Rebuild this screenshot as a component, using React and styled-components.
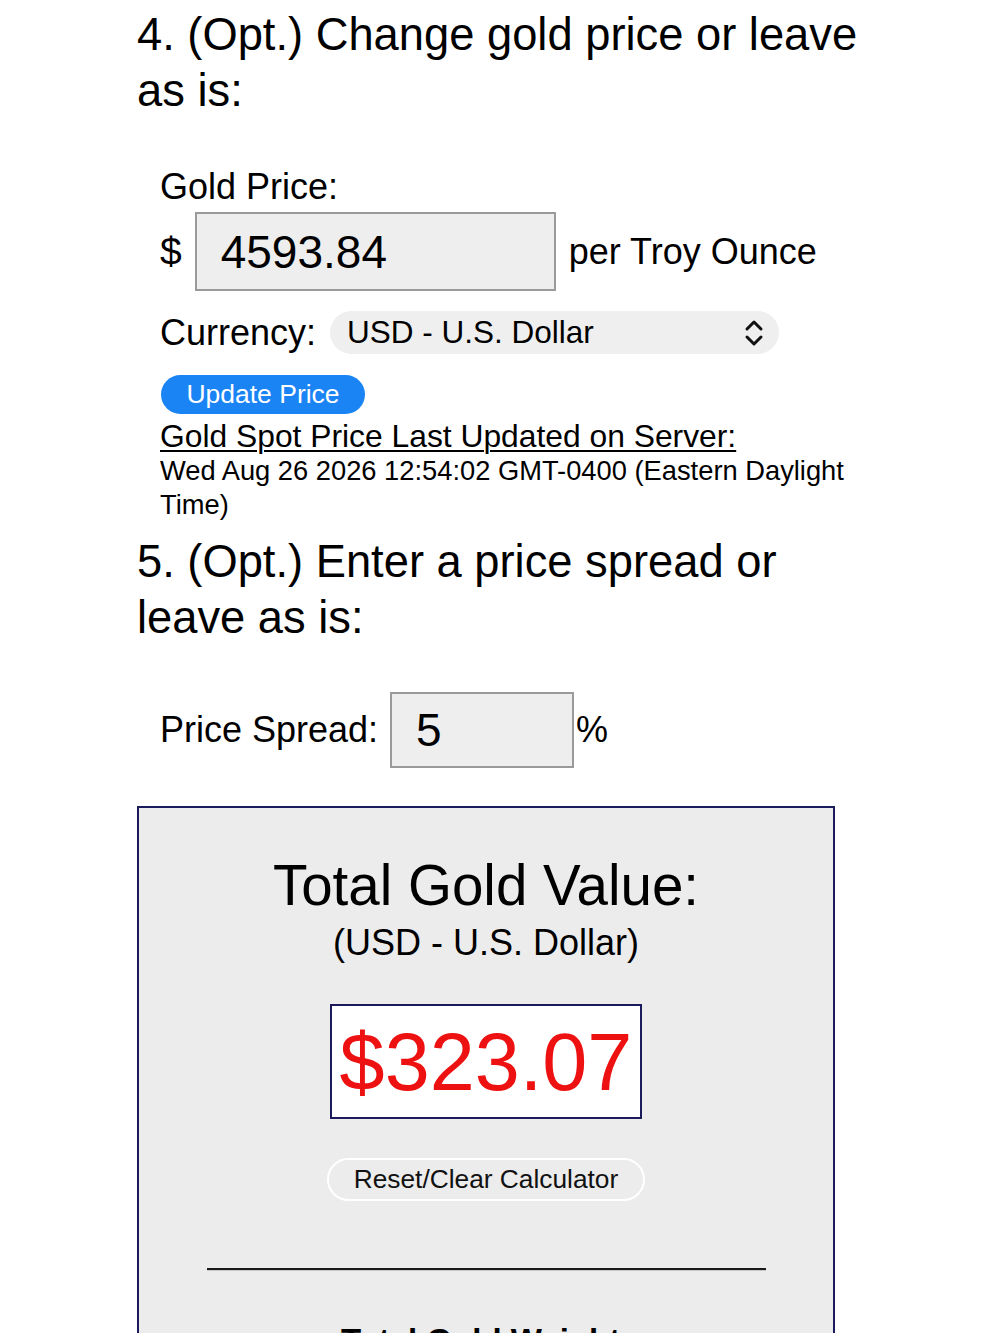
import React from "react";
import styled, { createGlobalStyle } from "styled-components";

const Global = createGlobalStyle`
  html, body { margin: 0; padding: 0; background: #ffffff; }
  body { font-family: "Liberation Sans", Arial, Helvetica, sans-serif; color: #000; }
  * { box-sizing: border-box; }
`;

const Page = styled.div`
  width: 1000px;
  padding: 7px 0 0 137px;
  overflow: hidden;
  height: 1333px;
`;

const Column = styled.div`
  width: 728px;
`;

const StepHeading = styled.h2`
  margin: ${(p) => p.$mt || 0}px 0 0 0;
  font-size: 45.3px;
  line-height: 56px;
  font-weight: normal;
`;

const Indent = styled.div`
  padding-left: 23px;
`;

const FieldLabel = styled.div`
  margin-top: ${(p) => p.$mt || 0}px;
  font-size: 36px;
  line-height: 42px;
`;

const Row = styled.div`
  display: flex;
  align-items: center;
  gap: ${(p) => p.$gap || 12}px;
  margin-top: ${(p) => p.$mt || 0}px;
  font-size: 36px;
`;

const Dollar = styled.span`
  font-size: 39px;
`;

const ValueInput = styled.input`
  width: ${(p) => p.$w}px;
  height: ${(p) => p.$h}px;
  background: #eeeeee;
  border: 2px solid #9a9a9a;
  padding: 0 0 0 24px;
  font-family: "Liberation Sans", Arial, sans-serif;
  font-size: 46px;
  color: #000;
  outline: none;
`;

const Select = styled.div`
  width: 449px;
  height: 43px;
  border-radius: 22px;
  background: #efefef;
  display: flex;
  align-items: center;
  justify-content: space-between;
  padding: 0 14px 0 17px;
  font-size: 31.5px;
`;

const UpdateButton = styled.button`
  margin-top: 21px;
  margin-left: 1px;
  width: 204px;
  height: 39px;
  border: none;
  border-radius: 20px;
  background: #1a84f5;
  color: #fff;
  font-family: "Liberation Sans", Arial, sans-serif;
  font-size: 26.5px;
  padding: 0;
  display: block;
`;

const ServerLabel = styled.div`
  margin-top: 5px;
  font-size: 31.8px;
  line-height: 35px;
  text-decoration: underline;
  text-decoration-thickness: 2px;
  text-underline-offset: 3px;
`;

const DateText = styled.div`
  font-size: 27.3px;
  line-height: 34px;
`;

const Percent = styled.span`
  font-size: 36px;
`;

const ResultBox = styled.div`
  margin-top: 38px;
  width: 698px;
  height: 600px;
  border: 2px solid #1b1b5c;
  background: #ececec;
  display: flex;
  flex-direction: column;
  align-items: center;
  padding-top: 47px;
`;

const ResultTitle = styled.div`
  font-size: 56.5px;
  line-height: 62px;
`;

const ResultSub = styled.div`
  margin-top: 5px;
  font-size: 36px;
  line-height: 42px;
`;

const ValueBox = styled.div`
  margin-top: 40px;
  width: 312px;
  height: 115px;
  border: 2px solid #1b1b5c;
  background: #ffffff;
  display: flex;
  align-items: center;
  justify-content: center;
  color: #ee1111;
  font-size: 81px;
  padding-top: 2px;
`;

const ResetButton = styled.button`
  margin-top: 39px;
  width: 318px;
  height: 43px;
  border-radius: 22px;
  border: 2px solid #ffffff;
  background: #ececec;
  font-family: "Liberation Sans", Arial, sans-serif;
  font-size: 26.3px;
  color: #111;
  padding: 0;
`;

const Divider = styled.hr`
  margin: 67px 0 0 0;
  width: 559px;
  height: 0;
  border: none;
  border-top: 2px solid #1a1a1a;
  border-bottom: 1px solid #c8c8c8;
`;

const WeightTitle = styled.div`
  margin-top: 50px;
  font-size: 33px;
  font-weight: bold;
  line-height: 40px;
`;

const Chevrons = () => (
  <svg width="22" height="30" viewBox="0 0 22 30" fill="none" stroke="#111" strokeWidth="3" strokeLinecap="round" strokeLinejoin="round">
    <path d="M4 11 L11 4 L18 11" />
    <path d="M4 19 L11 26 L18 19" />
  </svg>
);

export default function App() {
  return (
    <>
      <Global />
      <Page>
        <Column>
          <StepHeading>4. (Opt.) Change gold price or leave as is:</StepHeading>
          <Indent>
            <FieldLabel $mt={47}>Gold Price:</FieldLabel>
            <Row $mt={4} $gap={13}>
              <Dollar>$</Dollar>
              <ValueInput $w={361} $h={79} value="4593.84" readOnly />
              <span>per Troy Ounce</span>
            </Row>
            <Row $mt={20} $gap={14}>
              <span>Currency:</span>
              <Select>
                <span>USD - U.S. Dollar</span>
                <Chevrons />
              </Select>
            </Row>
            <UpdateButton>Update Price</UpdateButton>
            <ServerLabel>Gold Spot Price Last Updated on Server:</ServerLabel>
            <DateText>Wed Aug 26 2026 12:54:02 GMT-0400 (Eastern Daylight Time)</DateText>
          </Indent>
          <StepHeading $mt={12}>5. (Opt.) Enter a price spread or leave as is:</StepHeading>
          <Indent>
            <Row $mt={46} $gap={12}>
              <span>Price Spread:</span>
              <Row $gap={2}>
                <ValueInput $w={184} $h={76} value="5" readOnly />
                <Percent>%</Percent>
              </Row>
            </Row>
          </Indent>
          <ResultBox>
            <ResultTitle>Total Gold Value:</ResultTitle>
            <ResultSub>(USD - U.S. Dollar)</ResultSub>
            <ValueBox>$323.07</ValueBox>
            <ResetButton>Reset/Clear Calculator</ResetButton>
            <Divider />
            <WeightTitle>Total Gold Weight:</WeightTitle>
          </ResultBox>
        </Column>
      </Page>
    </>
  );
}
